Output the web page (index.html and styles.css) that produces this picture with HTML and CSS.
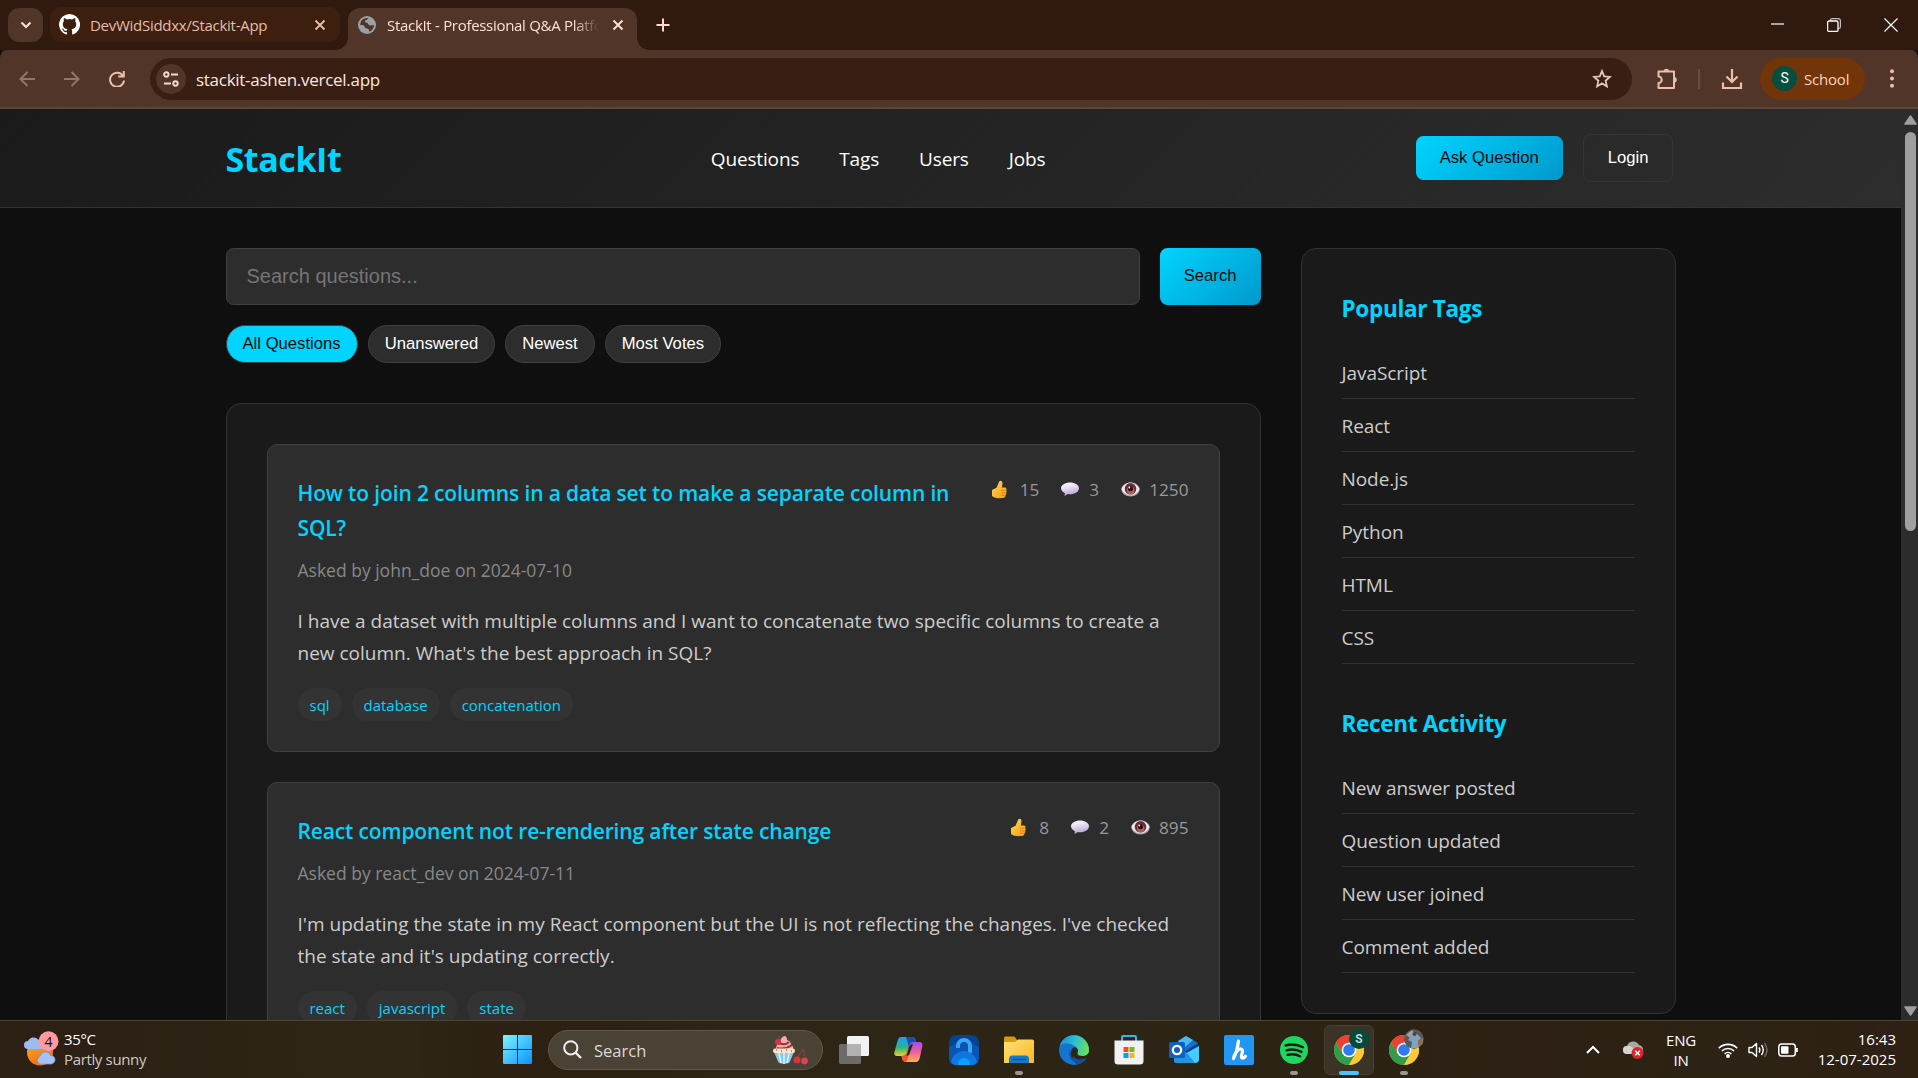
FILE: index.html
```html
<!DOCTYPE html>
<html lang="en">
<head>
<meta charset="utf-8">
<title>StackIt - Professional Q&amp;A Platform</title>
<link rel="stylesheet" href="styles.css">
</head>
<body>
<svg class="defs" width="0" height="0">
  <defs>
    <linearGradient id="thumbG" x1="0" y1="0" x2="1" y2="1"><stop offset="0" stop-color="#ffd94a"/><stop offset="1" stop-color="#f59a1c"/></linearGradient>
    <linearGradient id="bubG" x1="0" y1="0" x2="0.3" y2="1"><stop offset="0.3" stop-color="#f1ecf8"/><stop offset="1" stop-color="#bba6d6"/></linearGradient>
    <linearGradient id="winG" x1="0" y1="0" x2="1" y2="1"><stop offset="0" stop-color="#7df3ff"/><stop offset="1" stop-color="#0a93fa"/></linearGradient>
    <linearGradient id="foldG" x1="0" y1="0" x2="1" y2="1"><stop offset="0" stop-color="#ffe27a"/><stop offset="1" stop-color="#f9b81f"/></linearGradient>
    <linearGradient id="edgeG" x1="0" y1="0.3" x2="1" y2="0.5"><stop offset="0" stop-color="#1f8fdc"/><stop offset="0.5" stop-color="#2cc0d0"/><stop offset="1" stop-color="#6be255"/></linearGradient>
    <linearGradient id="copA" x1="0" y1="0" x2="0" y2="1"><stop offset="0" stop-color="#1ea0f5"/><stop offset="0.55" stop-color="#2bb38a"/><stop offset="1" stop-color="#f2d11b"/></linearGradient>
    <linearGradient id="copB" x1="0" y1="0" x2="0" y2="1"><stop offset="0" stop-color="#a24df0"/><stop offset="0.5" stop-color="#ef5fa0"/><stop offset="1" stop-color="#ffb14a"/></linearGradient>
    <linearGradient id="sunG" x1="0" y1="0" x2="0.5" y2="1"><stop offset="0" stop-color="#f5b52c"/><stop offset="1" stop-color="#ee6d12"/></linearGradient>
    <symbol id="thumb" viewBox="0 0 25 20"><path d="M2 10l4.500-2.200L9.200 1.600c.7-1.600 3.600-1 3.300 1.700L12 7.500l3 .1c1.500.1 1.900 1.400 1.200 2.500.8.900.6 2-.1 2.600.5 1 .2 2-.6 2.500 0 1.600-.9 2.700-2.500 2.800-3.500.3-7 .2-9-.8L2 16z" fill="url(#thumbG)"/><path d="M11 10.300h4.500M11 12.900h4.500M11 15.400h3.600" stroke="#de8418" stroke-width=".8"/></symbol>
    <symbol id="bubble" viewBox="0 0 25 20"><path d="M11 2.500c5 0 9 2.500 9 5.800 0 3.400-4 6-9 6-.8 0-1.500 0-2.200-.2L5.600 16l.3-2.800C3.600 12.200 2 10.400 2 8.300c0-3.300 4-5.800 9-5.800z" fill="url(#bubG)"/></symbol>
    <symbol id="eye" viewBox="0 0 25 20"><ellipse cx="11.500" cy="9.500" rx="9.200" ry="7" fill="#a99fae"/><path d="M2.500 9C5 3.800 9 2.500 11.500 2.500S18 3.800 20.500 9c-2 4.500-5.500 6.300-9 6.300S4.500 13.500 2.500 9z" fill="#eeeaf0"/><circle cx="11.500" cy="8.800" r="5.800" fill="#6a2c36"/><circle cx="11.700" cy="10.400" r="3.800" fill="#b06450"/><circle cx="11.500" cy="8.800" r="2.500" fill="#210d14"/><circle cx="10.300" cy="7.500" r=".9" fill="#fff"/></symbol>
    <symbol id="chrome" viewBox="0 0 30 30"><circle cx="15" cy="15" r="15" fill="#f5bd18"/><path d="M2 7.500A15 15 0 0 1 28 7.500H15l-6.500 11.250z" fill="#ea4335"/><path d="M2 7.500 A15 15 0 0 0 15 30l6.500-11.250H8.500z" fill="#2f9e4a"/><path d="M15 7.500h13A15 15 0 0 1 15 30l6.500-11.250z" fill="#fcc934"/><circle cx="15" cy="15" r="7.300" fill="#fff"/><circle cx="15" cy="15" r="5.800" fill="#2e7bf0"/></symbol>
    <symbol id="close" viewBox="0 0 12 12"><path d="M1.500 1.500l9 9M10.500 1.500l-9 9" stroke="currentColor" stroke-width="1.900" fill="none"/></symbol>
  </defs>
</svg>

<div class="tabstrip">
  <div class="tab-search"><svg width="12" height="8" viewBox="0 0 12 8"><path d="M1.500 1.500L6 6l4.500-4.500" fill="none" stroke="#ffdcca" stroke-width="2.200"/></svg></div>
  <div class="tab tab-idle">
    <svg class="fav" width="21" height="21" viewBox="0 0 16 16"><path fill="#fff" d="M8 0a8 8 0 0 0-2.530 15.590c.4.070.55-.17.55-.38v-1.490c-2.010.37-2.530-.49-2.690-.94-.09-.23-.48-.94-.82-1.130-.28-.15-.68-.52-.01-.53.630-.01 1.080.58 1.230.82.720 1.210 1.870.87 2.330.66.070-.52.280-.87.510-1.070-1.780-.2-3.640-.89-3.640-3.950 0-.87.310-1.590.820-2.150-.080-.2-.360-1.020.080-2.120 0 0 .670-.21 2.200.82a7.600 7.600 0 0 1 4 0c1.530-1.040 2.200-.82 2.200-.82.440 1.100.160 1.920.080 2.120.510.56.820 1.270.820 2.150 0 3.070-1.870 3.750-3.650 3.950.290.25.540.73.540 1.480v2.200c0 .21.150.46.550.38A8 8 0 0 0 8 0z"/></svg>
    <span class="tab-title t1">DevWidSiddxx/Stackit-App</span>
    <svg class="x" width="12" height="12"><use href="#close"/></svg>
  </div>
  <div class="tab tab-active">
    <svg class="fav" width="18" height="18" viewBox="0 0 18 18"><circle cx="9" cy="9" r="9" fill="#9aa0a6"/><path d="M10.500 2Q9 4 7 4.500q-.5 2 2.500 2.500 1 2.500 3.500 2.500l3-.5q-.2 5-5 6.800.5-2.800-1.500-3.300-3 0-3-2.500Q5 8.500 2.200 9 2 3 8.500 2z" fill="#503528"/><path d="M9.500 3.500q2.500 1.500 3.500 0l1.500 1.500q-1 3-4 3-1-2.500-2-3z" fill="#9aa0a6"/></svg>
    <span class="tab-title t2">StackIt - Professional Q&amp;A Platform</span>
    <svg class="x" width="12" height="12"><use href="#close"/></svg>
  </div>
  <svg class="plus" width="14" height="14" viewBox="0 0 14 14"><path d="M7 0.500v13M.5 7h13" stroke="#ffdcca" stroke-width="2"/></svg>
  <div class="win">
    <svg width="13" height="13" viewBox="0 0 13 13"><path d="M0 6h13" stroke="#fff" stroke-width="1.200"/></svg>
    <svg width="14" height="14" viewBox="0 0 14 14"><path d="M3.500 3V2.200A1.700 1.700 0 0 1 5.200.6h6A2.200 2.200 0 0 1 13.400 2.800v6a1.700 1.700 0 0 1-1.700 1.700H11" fill="none" stroke="#c9bfba" stroke-width="1.200"/><rect x=".6" y="3" width="10.400" height="10.400" rx="1.500" fill="none" stroke="#fff" stroke-width="1.300"/></svg>
    <svg width="14" height="14" viewBox="0 0 14 14"><path d="M.5.5l13 13M13.500.5l-13 13" stroke="#fff" stroke-width="1.200"/></svg>
  </div>
</div>

<div class="toolbar">
  <div class="navbtns">
    <svg width="16" height="16" viewBox="0 0 16 16"><path d="M16 8H2M8.500 1L1.500 8l7 7" fill="none" stroke="#91776b" stroke-width="2"/></svg>
    <svg width="16" height="16" viewBox="0 0 16 16"><path d="M0 8h14M7.500 1l7 7-7 7" fill="none" stroke="#91776b" stroke-width="2"/></svg>
    <svg width="16" height="16" viewBox="0 0 16 16"><path d="M14 5A7 7 0 1 0 15 9.500M14.800 0v5.500H9.200" fill="none" stroke="#ecbfa8" stroke-width="2"/></svg>
  </div>
  <div class="omnibox">
    <div class="site"><svg width="16" height="16" viewBox="0 0 16 16" fill="none" stroke="#f5dbcd" stroke-width="1.900"><circle cx="3.300" cy="3.500" r="2.200"/><path d="M8 3.500h7M1 12.500h7"/><circle cx="12.500" cy="12.500" r="2.200"/></svg></div>
    <span class="url">stackit-ashen.vercel.app</span>
    <svg class="star" width="20" height="20" viewBox="0 0 20 20"><path d="M10 2l2.200 5.400 5.800.5-4.400 3.800 1.300 5.700-4.900-3-4.900 3 1.300-5.700L2 7.900l5.800-.5z" fill="none" stroke="#dcc9c0" stroke-width="1.800"/></svg>
  </div>
  <div class="actions">
    <svg width="22" height="22" viewBox="0 0 22 22"><path d="M2.500 3.500H18V20H2.500v-5a3 3 0 0 0 0-6.500z" fill="none" stroke="#ecbfa8" stroke-width="2" stroke-linejoin="round"/><path d="M7.700 3.500a2.700 2.700 0 0 1 5.400 0zM18 9a2.800 2.800 0 0 1 0 5.600z" fill="#ecbfa8"/></svg>
    <i class="sep"></i>
    <svg width="22" height="22" viewBox="0 0 22 22"><path d="M11 1v13M5.500 8.500L11 14l5.500-5.500M2 14.500V20h18v-5.500" fill="none" stroke="#ecbfa8" stroke-width="2.200"/></svg>
    <div class="profile"><b>S</b><span>School</span></div>
    <svg class="dots" width="4" height="19" viewBox="0 0 4 19" fill="#ecbfa8"><circle cx="2" cy="2.200" r="2"/><circle cx="2" cy="9.500" r="2"/><circle cx="2" cy="16.800" r="2"/></svg>
  </div>
</div>

<div class="view">
  <div class="page">
    <header class="header">
      <div class="inner">
        <div class="logo">StackIt</div>
        <nav class="nav"><a>Questions</a><a>Tags</a><a>Users</a><a>Jobs</a></nav>
        <div class="btns"><button class="btn primary">Ask Question</button><button class="btn ghost">Login</button></div>
      </div>
    </header>
    <div class="content">
      <main class="main">
        <div class="searchrow"><input class="q" placeholder="Search questions..."><button class="btn primary">Search</button></div>
        <div class="filters"><button class="chip on">All Questions</button><button class="chip">Unanswered</button><button class="chip">Newest</button><button class="chip">Most Votes</button></div>
        <section class="list">
          <article class="card">
            <div class="top">
              <h3 class="title">How to join 2 columns in a data set to make a separate column in SQL?</h3>
              <div class="stats"><span><svg><use href="#thumb"/></svg>15</span><span><svg><use href="#bubble"/></svg>3</span><span><svg><use href="#eye"/></svg>1250</span></div>
            </div>
            <div class="meta">Asked by john_doe on 2024-07-10</div>
            <p class="body">I have a dataset with multiple columns and I want to concatenate two specific columns to create a<br>new column. What's the best approach in SQL?</p>
            <div class="tags"><span>sql</span><span>database</span><span>concatenation</span></div>
          </article>
          <article class="card">
            <div class="top">
              <h3 class="title">React component not re-rendering after state change</h3>
              <div class="stats"><span><svg><use href="#thumb"/></svg>8</span><span><svg><use href="#bubble"/></svg>2</span><span><svg><use href="#eye"/></svg>895</span></div>
            </div>
            <div class="meta">Asked by react_dev on 2024-07-11</div>
            <p class="body">I'm updating the state in my React component but the UI is not reflecting the changes. I've checked<br>the state and it's updating correctly.</p>
            <div class="tags"><span>react</span><span>javascript</span><span>state</span></div>
          </article>
        </section>
      </main>
      <aside class="side">
        <h3>Popular Tags</h3>
        <ul><li>JavaScript</li><li>React</li><li>Node.js</li><li>Python</li><li>HTML</li><li>CSS</li></ul>
        <h3>Recent Activity</h3>
        <ul class="recent"><li>New answer posted</li><li>Question updated</li><li>New user joined</li><li>Comment added</li></ul>
      </aside>
    </div>
  </div>
  <div class="scroll">
    <svg width="13" height="10" viewBox="0 0 13 10"><path d="M6.500 1L12 9H1z" fill="#9f9f9f" stroke="#9f9f9f" stroke-width="1.500" stroke-linejoin="round"/></svg>
    <i class="thumbbar"></i>
    <svg class="down" width="13" height="10" viewBox="0 0 13 10"><path d="M6.500 9L12 1H1z" fill="#9f9f9f" stroke="#9f9f9f" stroke-width="1.500" stroke-linejoin="round"/></svg>
  </div>
</div>

<footer class="taskbar">
  <div class="weather">
    <svg width="36" height="36" viewBox="0 0 36 36"><circle cx="16" cy="21.500" r="13" fill="url(#sunG)"/><path d="M4 18a4 4 0 0 1 0-8 6 6 0 0 1 10-1.500l4 9.500z" fill="#9dbcf3"/><path d="M16 33a4 4 0 0 1 0-7.500 5.500 5.500 0 0 1 10.500-1A4.200 4.200 0 0 1 27 33z" fill="#a3c3fa" stroke="#7397dd" stroke-width=".8"/><circle cx="24.500" cy="10.300" r="10" fill="#ff9aa2"/><text x="24.500" y="15.500" text-anchor="middle" font-family="Open Sans" font-size="14" fill="#20100c">4</text></svg>
    <div class="wtext"><div>35°C</div><div class="cond">Partly sunny</div></div>
  </div>
  <div class="cell start"><svg width="29" height="29" viewBox="0 0 29 29" fill="url(#winG)"><path d="M1 0h13v14H0V1a1 1 0 0 1 1-1zM15 0h13a1 1 0 0 1 1 1v13H15zM0 15h14v14H1a1 1 0 0 1-1-1zM15 15h14v13a1 1 0 0 1-1 1H15z"/></svg></div>
  <div class="tsearch">
    <svg width="19" height="19" viewBox="0 0 19 19"><circle cx="7.800" cy="7.800" r="6.600" fill="none" stroke="#eee" stroke-width="2"/><path d="M12.500 12.500l5.500 5.500" stroke="#eee" stroke-width="2.400"/></svg>
    <span>Search</span>
    <svg class="cake" width="36" height="30" viewBox="0 0 36 30"><path d="M2 17h20l-4.500 10.500q-5.500 2.500-11 0z" fill="#86c8ee"/><path d="M7 18l2 10M12 18v11M17 18l-2 10" stroke="#d8f1ff" stroke-width="1.600"/><path d="M4 14q0-5 4-6Q8 3 12 1q3 0 3 4 4 1 4 5 3 1 2 5z" fill="#f5a9b8"/><path d="M7 8q6 3 10-1M5 13q8 2 15-3" stroke="#8b3f2c" stroke-width="2" fill="none"/><rect x="1" y="13.500" width="22" height="4.500" rx="2.200" fill="#f8e6c8"/><path d="M4 15h1M9 16h1M14 15h1M19 16h1" stroke="#d85a6a" stroke-width="1.500"/><circle cx="6" cy="7" r="3" fill="#d63440"/><path d="M6 4l2-3M25 23l6-9 3 10" stroke="#8d4a30" fill="none"/><circle cx="25" cy="25" r="3.500" fill="#d8323c"/><circle cx="32.500" cy="26" r="3.400" fill="#e0444a"/></svg>
  </div>
  <div class="apps">
    <div class="cell"><svg width="30" height="28" viewBox="0 0 30 28"><rect y="8" width="22" height="20" rx="1.500" fill="#6d6b69"/><rect x="8" width="22" height="20" rx="1.500" fill="#f2f2f2"/><path d="M8 8h14v12H8z" fill="#b3b2b0"/></svg></div>
    <div class="cell"><svg width="29" height="27" viewBox="0 0 29 27"><path d="M7 1h11q3 0 4 4l-6 1-3 11q-1 3-5 3H3q-3.500 0-2.500-4L3.500 5Q4.500 1 7 1z" fill="url(#copA)"/><path d="M12 1h6q3 0 4 4l1 3h-4q-3 0-4 3z" fill="#174fb8"/><path d="M22 26H12q-3 0-4-4l-.5-2q4 0 5-3l3-8q1-3 4-3h6q3.500 0 2.800 4L26 21q-1 5-4 5z" fill="url(#copB)"/><path d="M7.500 20q4 0 5.500-4l1 6q-1 4-3 4-3-1-3.500-6z" fill="#f0552c"/><path d="M15 11q1-3 4-3l-3.500 10q-1 2-3 2z" fill="#2d2516"/></svg></div>
    <div class="cell"><svg width="30" height="30" viewBox="0 0 30 30"><defs><clipPath id="lk"><rect width="30" height="30" rx="7"/></clipPath></defs><g clip-path="url(#lk)"><rect width="30" height="30" fill="#07418f"/><path d="M0 12q7-5 15-5t15 5v18H0z" fill="#0a54b4"/><path d="M9 13v-2a6 6 0 0 1 12 0v7" fill="none" stroke="#35a5f5" stroke-width="4"/><circle cx="15" cy="29" r="13" fill="#0e78e0"/><circle cx="15" cy="29" r="6" fill="#0aa0ff"/></g></svg></div>
    <div class="cell"><svg width="30" height="28" viewBox="0 0 30 28"><path d="M0 2q0-1.500 1.500-1.500h9L13 4v6H0z" fill="#d99a08"/><path d="M0 6h11l3-2.500h14.500Q30 3.500 30 5v22H0z" fill="url(#foldG)"/><path d="M5 27v-4q0-3.500 3.500-3.500h13Q25 19.500 25 23v4z" fill="#1479c8"/><path d="M9 23.500h13" stroke="#0b4a86" stroke-width="1.200"/></svg><i class="dot"></i></div>
    <div class="cell"><svg width="30" height="30" viewBox="0 0 30 30"><circle cx="15" cy="15" r="15" fill="#1474cf"/><path d="M1 10A15 15 0 0 1 30 15q0 6-6.500 6-6 0-5-3 1-4-2-6.500Q9 6 1 10z" fill="url(#edgeG)"/><path d="M11 14q-3 10 6 13.500 6 1.500 11-4-9 4-14.500-2Q11 18 11 14z" fill="#0c4a9c"/><path d="M12 18q0-5 4-6 4 2 2.500 5.500-1 4 6 3.500 3 0 5.500-3.500v5l-2 1.500q-9 3.500-14-1-2-2-2-5z" fill="#2d2516"/><path d="M14 21q5 5.500 14 2-4 5-9 6.500-6-2-5-8.500z" fill="#10509f"/></svg></div>
    <div class="cell"><svg width="30" height="30" viewBox="0 0 30 30"><path d="M8 7V2q0-1 1-1h12q1 0 1 1v5" fill="none" stroke="#2fb7ee" stroke-width="2"/><path d="M.5 5.500h29V26q0 3.500-3.500 3.500H4Q.5 29.500.5 26z" fill="#f1f1f1"/><path d="M9.500 12h5v5h-5z" fill="#f04f23"/><path d="M15.500 12h5v5h-5z" fill="#7db911"/><path d="M9.500 18h5v5h-5z" fill="#08a0ec"/><path d="M15.500 18h5v5h-5z" fill="#fdb60b"/></svg></div>
    <div class="cell"><svg width="30" height="27" viewBox="0 0 30 27"><path d="M5 8L17 0l12 7v16H5z" fill="#1471c8"/><path d="M9 5l8-5 7 4-9 8z" fill="#4bb7f4"/><path d="M15 16l14-9v15z" fill="#0a3f98"/><path d="M30 10v13q0 4-4 4H8q-3 0-3-3z" fill="#43cdf8"/><path d="M5 18l12-2 9 11H8q-3 0-3-3z" fill="#1f93e4"/><rect y="6" width="16" height="16" rx="1.500" fill="#1061bb"/><circle cx="8" cy="14" r="4.200" fill="none" stroke="#fff" stroke-width="2.300"/></svg></div>
    <div class="cell"><svg width="30" height="30" viewBox="0 0 30 30"><rect width="30" height="30" rx="2" fill="#2196f3"/><path d="M9.500 23.500q4-8 5-17.500M10 21q4-7.500 7-7 2.500.5 1 4.500-1.500 4.500.5 4.700 1.500 0 3-2" fill="none" stroke="#fff" stroke-width="3.200" stroke-linecap="round" stroke-linejoin="round"/></svg></div>
    <div class="cell"><svg width="28" height="28" viewBox="0 0 28 28"><circle cx="14" cy="14" r="14" fill="#1ed760"/><path d="M5.500 9.500q9-2.700 17.500 1.700M6.500 14.300q8-2.200 15 1.600M7.500 18.800q7-1.600 12.500 1.500" fill="none" stroke="#141a12" stroke-width="2.400" stroke-linecap="round"/></svg><i class="dot"></i></div>
    <div class="cell active"><svg width="30" height="30"><use href="#chrome"/></svg><b class="badge">S</b><i class="dot wide"></i></div>
    <div class="cell"><svg width="30" height="30"><use href="#chrome"/></svg><svg class="badge photo" viewBox="0 0 20 20"><circle cx="10" cy="10" r="10" fill="#55585c"/><path d="M2 6l6-5 4 5-4 4z" fill="#9aa3a8"/><path d="M8 5h5l4 4-3 3 1 7H7l1-6-4-2z" fill="#7fa2bd"/><circle cx="10.500" cy="5" r="2" fill="#5d4030"/><path d="M14 11l5-2v6l-4 3z" fill="#8b6f52"/></svg><i class="dot"></i></div>
  </div>
  <div class="tray">
    <svg class="chev" width="14" height="9" viewBox="0 0 14 9"><path d="M1 8l6-6 6 6" fill="none" stroke="#fff" stroke-width="2"/></svg>
    <svg class="cloud" width="21" height="18" viewBox="0 0 21 18"><path d="M4 13a4 4 0 0 1 0-8 6.500 6.500 0 0 1 12-1 5 5 0 0 1 2 9z" fill="#aaa6a2"/><path d="M4 13a4 4 0 0 1 0-8q4-1 9 5v3z" fill="#d5d3d1"/><circle cx="14.500" cy="12" r="6" fill="#e0222a"/><path d="M12.200 9.700l4.600 4.600M16.800 9.700l-4.600 4.600" stroke="#fff" stroke-width="1.600"/></svg>
    <div class="lang">ENG<br>IN</div>
    <svg class="wifi" width="20" height="16" viewBox="0 0 20 16" fill="none" stroke="#fff" stroke-width="1.600"><path d="M.8 6.200a13 13 0 0 1 18.400 0M3.800 9a9 9 0 0 1 12.400 0M6.600 11.800a5 5 0 0 1 6.800 0"/><circle cx="10" cy="14" r="1.200" fill="#fff"/></svg>
    <svg class="vol" width="21" height="16" viewBox="0 0 21 16" fill="none" stroke="#fff" stroke-width="1.400"><path d="M1 5.500h3L8.500 1.500v13L4 10.500H1z" stroke-linejoin="round"/><path d="M11 5.500q1.800 2.500 0 5M13.500 3q3.500 5 0 10"/><path d="M16.500 1.200q5 6.800 0 13.600" stroke="#777068"/></svg>
    <svg class="bat" width="21" height="14" viewBox="0 0 21 14"><rect x=".8" y="1" width="16.500" height="12" rx="2.800" fill="none" stroke="#fff" stroke-width="1.500"/><rect x="3" y="3.200" width="7.500" height="7.600" rx="1" fill="#fff"/><path d="M18.800 5v4" stroke="#fff" stroke-width="2"/></svg>
    <div class="clock">16:43<br>12-07-2025</div>
  </div>
</footer>
</body>
</html>
```
FILE: styles.css
```css
* { box-sizing: border-box; margin: 0; padding: 0; }
body { width: 1918px; height: 1078px; overflow: hidden; display: flex; flex-direction: column; background: #0f0f0f; color: #fff; font-family: "Open Sans", "Noto Sans", sans-serif; }
svg { display: block; flex: none; }
.defs { position: absolute; }

/* browser tab strip */
.tabstrip { position: relative; z-index: 1; flex: none; height: 50px; background: #301a0f; display: flex; align-items: flex-start; padding-left: 8px; }
.tab-search { width: 35px; height: 34px; margin-top: 8px; border-radius: 11px; background: #503528; display: flex; align-items: center; justify-content: center; }
.tab { display: flex; align-items: center; font-size: 15px; white-space: nowrap; }
.tab-idle { width: 290px; height: 35px; margin: 7px 8px 0 7px; padding: 0 14px 0 9px; border-radius: 11px; background: #3c1f0e; color: #e6bda8; }
.tab-active { position: relative; width: 289px; height: 42px; margin-top: 8px; padding: 0 13px 8px 10px; border-radius: 12px 12px 0 0; background: #503528; color: #ffdfd0; }
.tab-active::before, .tab-active::after { content: ""; position: absolute; bottom: 0; width: 12px; height: 12px; }
.tab-active::before { left: -12px; background: radial-gradient(circle at 0 0, transparent 11.500px, #503528 12px); }
.tab-active::after { right: -12px; background: radial-gradient(circle at 100% 0, transparent 11.500px, #503528 12px); }
.tab-title { overflow: hidden; margin-left: 10px; }
.t1 { letter-spacing: -.28px; }
.t2 { width: 212px; margin-left: 11px; letter-spacing: -.3px; -webkit-mask-image: linear-gradient(90deg, #000 88%, transparent); mask-image: linear-gradient(90deg, #000 88%, transparent); }
.tab .x { margin-left: auto; }
.plus { margin: 18px 0 0 19px; }
.win { margin: 18px 20px 0 auto; display: flex; gap: 43px; }

/* toolbar */
.toolbar { flex: none; height: 59px; background: #503528; border-bottom: 2px solid #584640; display: flex; align-items: center; border-radius: 8px 8px 0 0; box-shadow: 0 -10px 0 -2px #301a0f; padding-left: 19px; }
.navbtns { display: flex; gap: 29px; }
.omnibox { width: 1482px; height: 42px; margin-left: 25px; border-radius: 21px; background: #391e14; display: flex; align-items: center; padding: 0 20px 0 6px; }
.site { width: 30px; height: 30px; border-radius: 50%; background: #503528; display: flex; align-items: center; justify-content: center; }
.url { margin-left: 10px; padding-top: 1px; font-size: 17px; letter-spacing: -.28px; color: #fbe6dc; }
.star { margin-left: auto; }
.actions { display: flex; align-items: center; margin-left: 24px; }
.sep { width: 2px; height: 20px; margin: 0 21px 0 20px; background: #6e4a39; }
.profile { width: 105px; height: 42px; margin-left: 17px; padding-left: 12px; border-radius: 21px; background: #723409; color: #fbd5c3; display: flex; align-items: center; font-size: 15px; letter-spacing: -.2px; }
.profile b { width: 25px; height: 25px; margin-right: 7px; border-radius: 50%; background: #054e40; color: #fff; font: 14px/25px Roboto, sans-serif; text-align: center; }
.dots { margin-left: 25px; }

/* viewport */
.view { flex: none; height: 911px; display: flex; overflow: hidden; }
.page { width: 1901px; background: #0f0f0f; overflow: hidden; }
.scroll { width: 17px; background: #2c2c2c; display: flex; flex-direction: column; align-items: center; padding: 6px 0 4px 2px; }
.thumbbar { width: 11px; height: 399px; margin-top: 7px; border-radius: 6px; background: #9f9f9f; }
.down { margin-top: auto; }
.header { height: 99px; background: linear-gradient(135deg, #1a1a1a 0%, #2d2d2d 100%); border-bottom: 1px solid #333; }
.inner, .content { width: 1450px; margin: 0 auto; display: flex; }
.inner { height: 98px; padding-right: 2px; align-items: center; justify-content: space-between; }
.logo { width: 115px; padding-top: 1px; font-size: 34px; font-weight: 700; color: #00d4ff; letter-spacing: -.4px; white-space: nowrap; }
.nav { display: flex; gap: 40px; padding-top: 2px; font-size: 19px; font-weight: 500; letter-spacing: -.15px; }
.btns { display: flex; gap: 20px; align-items: center; }
.btn { font: 16.667px "Liberation Sans", Arial, sans-serif; border-radius: 7.500px; border: 0; padding: 0 24px; white-space: nowrap; }
.primary { background: linear-gradient(135deg, #00d4ff, #0099cc); color: #0a0a0a; }
.btns .btn { height: 44px; }
.btns .ghost { height: 48px; border: 1px solid #353535; background: none; color: #fff; }
.searchrow .btn { padding-bottom: 2px; }

.content { padding-top: 40px; gap: 40px; align-items: flex-start; }
.main { width: 1035px; }
.searchrow { display: flex; gap: 20px; height: 57px; }
.q { flex: 1; min-width: 0; border: 1px solid #404040; border-radius: 7.500px; background: #2d2d2d; padding: 0 20px; font: 20px "Liberation Sans", Arial, sans-serif; }
.q::placeholder { color: #757575; }
.filters { display: flex; gap: 10px; margin: 20px 0 40px; }
.chip { height: 38px; padding: 0 16px; border: 1px solid #404040; border-radius: 19px; background: #2d2d2d; color: #fff; font: 16.667px "Liberation Sans", Arial, sans-serif; }
.chip.on { background: #00d4ff; color: #0a0a0a; }
.list { border: 1px solid #333; border-radius: 15px; background: #1a1a1a; padding: 40px; display: flex; flex-direction: column; gap: 30px; }
.card { height: 308px; border: 1px solid #404040; border-radius: 10px; background: #2d2d2d; padding: 30px; }
.top { display: flex; justify-content: space-between; align-items: flex-start; }
.title { width: 670px; margin-top: 1px; font-size: 21px; line-height: 35.200px; font-weight: 600; color: #00d4ff; letter-spacing: -.14px; }
.stats { display: flex; gap: 20px; color: #999; font-size: 17.200px; line-height: 29px; }
.stats span { display: flex; align-items: center; gap: 5px; }
.stats svg { width: 25px; height: 20px; }
.meta { margin-top: 10px; font-size: 17.500px; line-height: 28.800px; color: #888; }
.body { margin-top: 20px; font-size: 19px; line-height: 32px; color: #ccc; letter-spacing: 0; white-space: nowrap; }
.tags { margin-top: 19px; display: flex; gap: 10px; }
.tags span { height: 33px; padding: 0 12px; border-radius: 16px; background: #333; color: #00d4ff; font-size: 15px; line-height: 34px; letter-spacing: -.02px; }
.side { width: 375px; height: 766px; border: 1px solid #333; border-radius: 15px; background: #1a1a1a; padding: 40px; }
.side h3 { font-size: 22.500px; line-height: 40.400px; margin-bottom: 16.750px; color: #00d4ff; letter-spacing: -.3px; }
.side ul { list-style: none; margin-bottom: 40px; }
.side li { height: 53px; border-bottom: 1px solid #333; padding-top: 10px; line-height: 34px; font-size: 19px; color: #ccc; letter-spacing: -.06px; }

/* taskbar */
.taskbar { flex: none; height: 58px; background: linear-gradient(90deg, #2c1f14, #2d2616 20%, #2c2013 28%, #2d2616 40%, #2b2314 70%, #2e2014 80%, #2c2315 90%, #2f2014); border-top: 1px solid #4a4336; display: flex; align-items: center; }
.weather { width: 490px; padding-left: 24px; display: flex; gap: 4px; }
.wtext { margin-top: -2px; font-size: 15px; line-height: 20px; letter-spacing: -.35px; }
.cond { color: #cfcac4; }
.cell { position: relative; width: 55px; height: 50px; display: flex; align-items: center; justify-content: center; flex: none; }
.tsearch { width: 275px; height: 40px; margin: 0 3px; padding: 0 14px; border: 1px solid #62594b; border-radius: 20px; background: #4a4234; display: flex; align-items: center; color: #ddd9d3; font-size: 16.500px; }
.tsearch span { margin-left: 12px; padding-top: 1px; }
.cake { margin-left: auto; }
.apps { display: flex; }
.dot { position: absolute; left: 23.500px; bottom: 0; width: 8px; height: 4px; border-radius: 2px; background: #9c978f; }
.dot.wide { left: 17.500px; width: 20px; background: #4cc2ff; }
.active::before { content: ""; position: absolute; left: 2.500px; right: 2.500px; top: 0; bottom: 0; border-radius: 6px; background: #3b3326; border: 1px solid #474031; }
.active svg { position: relative; }
.badge { position: absolute; left: 28px; top: 4px; width: 20px; height: 20px; border-radius: 50%; background: #06493d; color: #b9dcd3; font: bold 12px/20px Roboto, sans-serif; text-align: center; }
.photo { background: none; }
.tray { margin-left: auto; padding-right: 22px; display: flex; align-items: center; font-size: 15px; line-height: 20px; letter-spacing: -.15px; }
.cloud { margin-left: 23px; }
.lang { width: 40px; margin: 0 17px 0 17px; text-align: center; }
.vol { margin-left: 10px; }
.bat { margin-left: 9px; }
.clock { width: 97px; margin-top: -2px; text-align: right; letter-spacing: 0; }
```
